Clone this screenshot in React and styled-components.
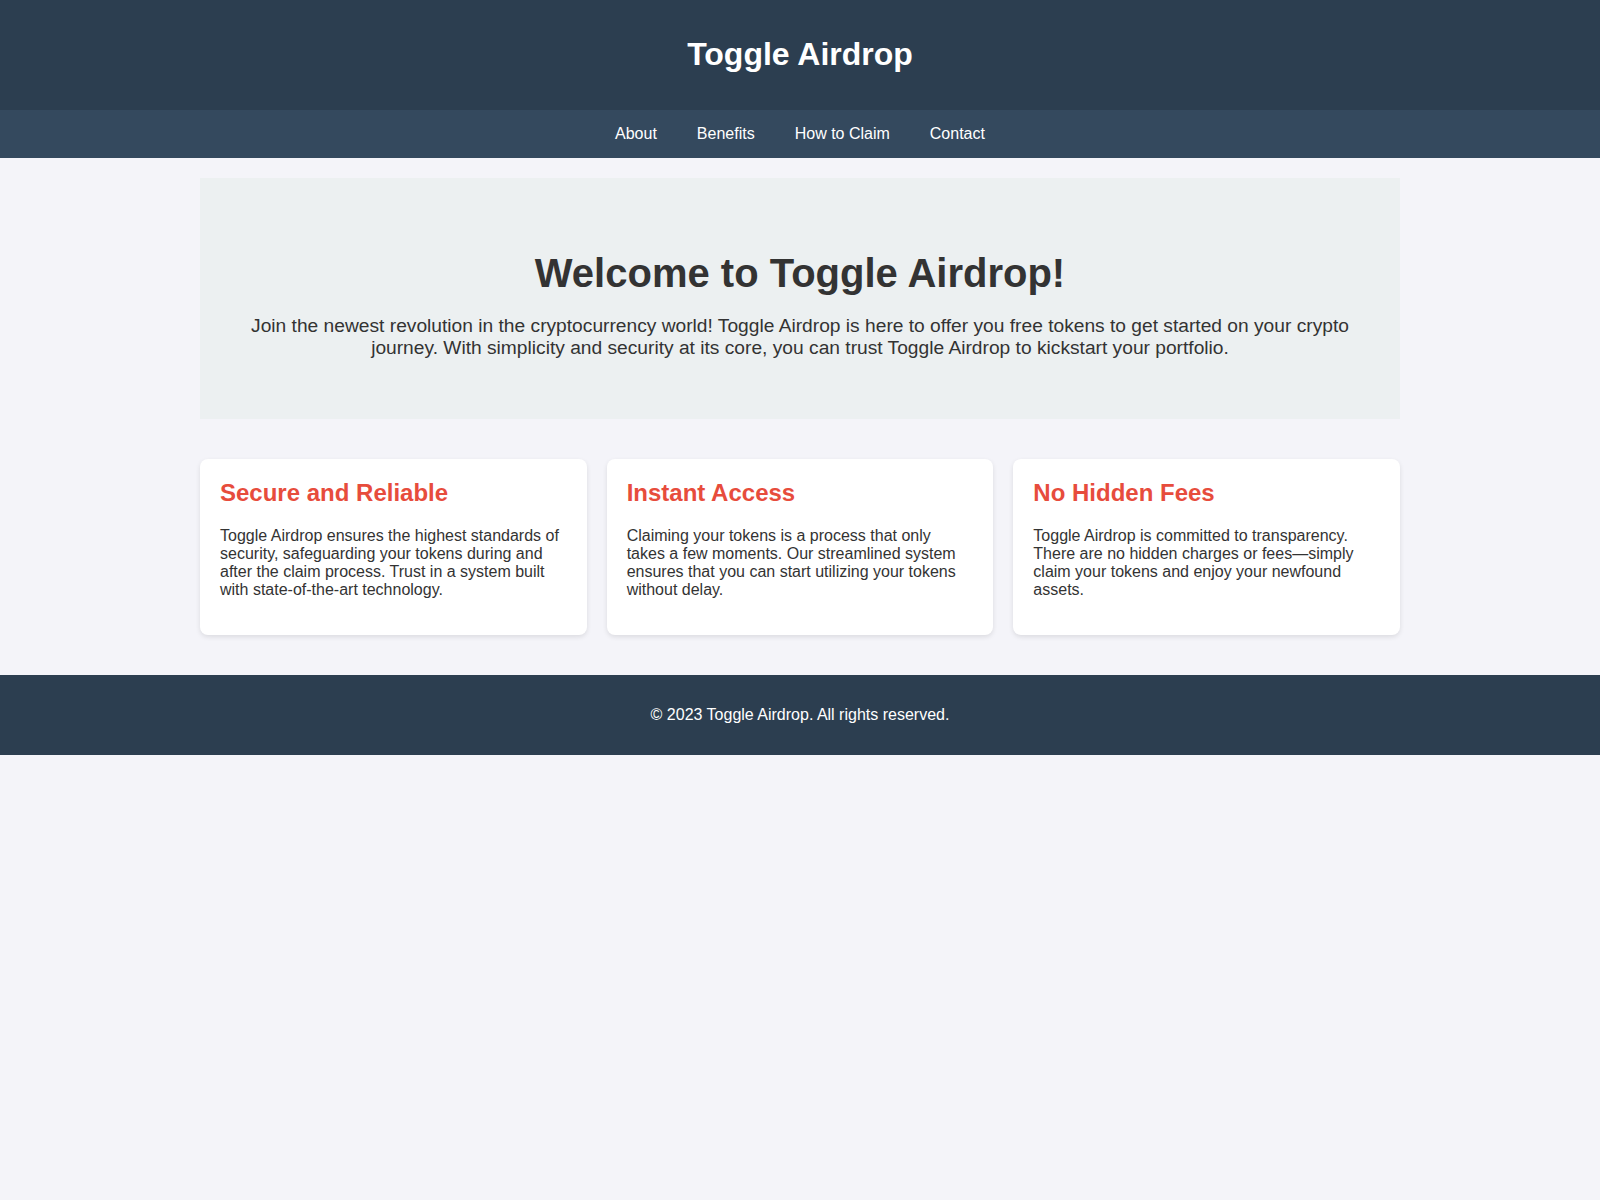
import styled, { createGlobalStyle } from "styled-components";

const GlobalStyle = createGlobalStyle`
  body {
    margin: 0;
    font-family: "Liberation Sans", Arial, sans-serif;
    background: #f4f4f9;
    color: #333;
  }
`;

const Header = styled.header`
  background: #2c3e50;
  color: #fff;
  padding: 15px 0;
  text-align: center;
`;

const Title = styled.h1`
  margin: 21.44px 0;
  font-size: 32px;
`;

const Nav = styled.nav`
  background: #34495e;
  padding: 15px 0;
  display: flex;
  justify-content: center;
  gap: 40px;
`;

const NavLink = styled.a`
  color: #fff;
  text-decoration: none;
  font-size: 16px;
`;

const Container = styled.main`
  max-width: 1200px;
  margin: 20px auto 40px;
  display: flex;
  flex-direction: column;
  gap: 40px;
`;

const Hero = styled.section`
  background: #ecf0f1;
  padding: 40px;
  text-align: center;
`;

const HeroTitle = styled.h2`
  font-size: 40px;
  margin: 33px 0 19px;
`;

const HeroText = styled.p`
  font-size: 19.2px;
  margin: 19px 0 20px;
`;

const Features = styled.section`
  display: grid;
  grid-template-columns: repeat(3, 1fr);
  gap: 20px;
`;

const Card = styled.div`
  background: #fff;
  padding: 20px;
  border-radius: 8px;
  box-shadow: 0 2px 5px rgba(0, 0, 0, 0.1);
`;

const CardTitle = styled.h3`
  color: #e74c3c;
  font-size: 24px;
  margin: 0 0 20px;
`;

const CardText = styled.p`
  font-size: 16px;
  margin: 0 0 16px;
`;

const Footer = styled.footer`
  background: #2c3e50;
  color: #fff;
  text-align: center;
  padding: 31px 0;
  font-size: 16px;
`;

const features = [
  {
    title: "Secure and Reliable",
    text: "Toggle Airdrop ensures the highest standards of security, safeguarding your tokens during and after the claim process. Trust in a system built with state-of-the-art technology.",
  },
  {
    title: "Instant Access",
    text: "Claiming your tokens is a process that only takes a few moments. Our streamlined system ensures that you can start utilizing your tokens without delay.",
  },
  {
    title: "No Hidden Fees",
    text: "Toggle Airdrop is committed to transparency. There are no hidden charges or fees\u2014simply claim your tokens and enjoy your newfound assets.",
  },
];

const links = ["About", "Benefits", "How to Claim", "Contact"];

const App = () => {
  return (
    <>
      <GlobalStyle />
      <Header>
        <Title>Toggle Airdrop</Title>
      </Header>
      <Nav>
        {links.map((link) => (
          <NavLink key={link} href="#">
            {link}
          </NavLink>
        ))}
      </Nav>
      <Container>
        <Hero>
          <HeroTitle>Welcome to Toggle Airdrop!</HeroTitle>
          <HeroText>
            Join the newest revolution in the cryptocurrency world! Toggle
            Airdrop is here to offer you free tokens to get started on your
            crypto journey. With simplicity and security at its core, you can
            trust Toggle Airdrop to kickstart your portfolio.
          </HeroText>
        </Hero>
        <Features>
          {features.map((feature) => (
            <Card key={feature.title}>
              <CardTitle>{feature.title}</CardTitle>
              <CardText>{feature.text}</CardText>
            </Card>
          ))}
        </Features>
      </Container>
      <Footer>&copy; 2023 Toggle Airdrop. All rights reserved.</Footer>
    </>
  );
};

export default App;
